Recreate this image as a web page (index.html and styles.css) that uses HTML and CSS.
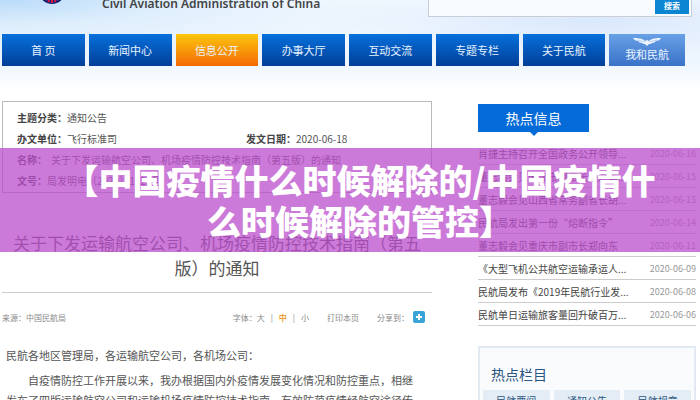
FILE: index.html
```html
<!DOCTYPE html>
<html lang="zh-CN">
<head>
  <meta charset="UTF-8" />
  <meta name="viewport" content="width=device-width, initial-scale=1.0"/>
  <title>中国民用航空局</title>
  <link rel="stylesheet" href="styles.css">
</head>
<body>
  <header class="header">
    <div class="top">
      <svg class="logo" viewBox="0 0 26 26" aria-hidden="true">
        <circle cx="13" cy="13" r="13" fill="#1d2577"/>
        <path d="M5 17l3 5M9 17l1 7M13 17v8M17 17l-1 7M21 17l-3 5" stroke="#d5163c" stroke-width="2"/>
      </svg>
      <p class="site-name">Civil Aviation Administration of China</p>
      <form class="search">
        <input type="text" class="search-input" aria-label="搜索内容">
        <button type="submit" class="search-button">搜索</button>
      </form>
    </div>
    <nav class="nav">
      <a href="#">首 页</a>
      <a href="#">新闻中心</a>
      <a href="#" class="active">信息公开</a>
      <a href="#">办事大厅</a>
      <a href="#">互动交流</a>
      <a href="#">专题专栏</a>
      <a href="#">关于民航</a>
      <a href="#" class="mine">
        <svg class="wings" viewBox="0 0 28 8" aria-hidden="true">
          <path d="M0 0c4 0 9 0 12 3l2-1 2 1c3-3 8-3 12-3-1 2-3 3-5 3-1 1-2 2-4 2-1 1-2 1-3 1l-2 2-2-2c-1 0-2 0-3-1-2 0-3-1-4-2-2 0-4-1-5-3z" fill="#eef5ff"/>
          <path d="M4 2l8 2M24 2l-8 2" stroke="#8fb5ea" stroke-width="0.6"/>
        </svg>
        我和民航
      </a>
    </nav>
  </header>

  <div class="content">
    <main class="article">
      <dl class="info">
        <div class="wide"><dt>主题分类：</dt><dd>通知公告</dd></div>
        <div><dt>办文单位：</dt><dd>飞行标准司</dd></div>
        <div><dt>发文日期：</dt><dd>2020-06-18</dd></div>
        <div class="wide"><dt>名称：</dt><dd class="name">关于下发运输航空公司、机场疫情防控技术指南（第五版）的通知</dd></div>
        <div class="wide"><dt>文号：</dt><dd>局发明电〔2020〕1923号</dd></div>
      </dl>
      <h1 class="title">关于下发运输航空公司、机场疫情防控技术指南（第五版）的通知</h1>
      <div class="meta">
        <span class="source">来源：中国民航局</span>
        <span class="sizes">字体：<a href="#">大</a><i>|</i><a href="#" class="current">中</a><i>|</i><a href="#">小</a></span>
        <a href="#">打印本页</a>
        <span class="share">分享到：
          <button type="button" class="share-button" aria-label="分享">
            <svg viewBox="0 0 12 12"><path d="M6 3v6M3 6h6" stroke="#fff" stroke-width="2"/></svg>
          </button>
        </span>
      </div>
      <div class="text">
        <p class="greeting">民航各地区管理局，各运输航空公司，各机场公司：</p>
        <p>自疫情防控工作开展以来，我办根据国内外疫情发展变化情况和防控重点，相继发布了四版运输航空公司和运输机场疫情防控技术指南，有效防范疫情经航空途径传播。</p>
      </div>
    </main>

    <aside class="sidebar">
      <h2 class="tab">热点信息</h2>
      <ul class="news">
        <li><a href="#">肖捷主持召开全国政务公开领导...</a><time>2020-06-16</time></li>
        <li><a href="#">董志毅会见天津市副市长金湘军...</a><time>2020-06-15</time></li>
        <li><a href="#">董志毅会见山西省常务副省长胡...</a><time>2020-06-15</time></li>
        <li><a href="#">民航局发出第一份“熔断指令”</a><time>2020-06-14</time></li>
        <li><a href="#">董志毅会见重庆市副市长郑向东</a><time>2020-06-11</time></li>
        <li><a href="#">《大型飞机公共航空运输承运人...</a><time>2020-06-09</time></li>
        <li><a href="#">民航局发布《2019年民航行业发...</a><time>2020-06-08</time></li>
        <li><a href="#">民航单日运输旅客量回升破百万...</a><time>2020-06-06</time></li>
      </ul>
      <section class="columns">
        <h2>热点栏目</h2>
        <div class="column-links">
          <a href="#">民航要闻</a>
          <a href="#">通知公告</a>
          <a href="#">民航规章</a>
        </div>
      </section>
    </aside>
  </div>

  <div class="banner">【中国疫情什么时候解除的/中国疫情什么时候解除的管控】</div>
</body>
</html>
```

FILE: styles.css
```css
* {
  box-sizing: border-box;
}
body {
  position: relative;
  height: 100vh;
  margin: 0;
  overflow: hidden;
  font-family: "Noto Sans CJK SC", "Noto Sans", sans-serif;
  font-size: 10px;
  color: #555;
  background: #fff;
}
a {
  color: inherit;
  text-decoration: none;
}
h1, h2, p, ul, dl, dd {
  margin: 0;
  padding: 0;
  font-weight: normal;
}

/* header */
.header {
  height: 101px;
  background:
    radial-gradient(ellipse at 0 0, #b9dbf9 0, rgba(210, 232, 251, 0.6) 18%, rgba(255, 255, 255, 0) 45%),
    radial-gradient(ellipse at 85% 20%, #d9e8fc 0, rgba(255, 255, 255, 0) 35%),
    linear-gradient(#f8fbff, #edf5fe 60%, #fff 90%);
}
.top {
  display: flex;
  align-items: flex-end;
  height: 17px;
  padding: 0 8px 0 39px;
  overflow: hidden;
}
.logo {
  width: 26px;
  height: 26px;
  margin-bottom: 13px;
  flex: none;
}
.site-name {
  margin: 0 auto 5px 37px;
  font-family: "Noto Sans", sans-serif;
  font-size: 12px;
  font-weight: 600;
  line-height: 16px;
  color: #444;
  white-space: nowrap;
}
.search {
  display: flex;
  flex: 0 0 264px;
  height: 40px;
  padding: 2px;
  background: #f8fbff;
  border: 1px solid #c9ced6;
}
.search-input {
  flex: 1;
  min-width: 0;
  border: 0;
  background: transparent;
}
.search-button {
  width: 34px;
  padding: 18px 0 0;
  border: 0;
  background: #0b84d2;
  color: #fff;
  font: bold 8px/16px "Noto Sans CJK SC", sans-serif;
}
.nav {
  display: flex;
  gap: 4px;
  margin-top: 17px;
  padding: 0 15px 0 2px;
}
.nav a {
  flex: 83;
  height: 32px;
  line-height: 33px;
  font-size: 11px;
  text-align: center;
  color: #e8f4ff;
  background: linear-gradient(#0670dc, #023f98);
}
.nav .active {
  background: linear-gradient(#fcc60c, #f46a05);
}
.nav .mine {
  display: flex;
  flex: 76;
  flex-direction: column;
  align-items: center;
  padding-top: 4px;
  line-height: 16px;
  background: linear-gradient(#68a0e6, #3a72c8);
}
.wings {
  width: 28px;
  height: 8px;
  flex: none;
}

/* two columns */
.content {
  display: grid;
  grid-template-columns: 430fr 218fr;
  gap: 46px;
  padding: 0 4px 0 2px;
}
.info {
  display: grid;
  grid-template-columns: 229fr 171fr;
  padding: 5px 14px 1px;
  border: 1px solid #b8b8b8;
  line-height: 21px;
}
.info div {
  display: flex;
}
.info .wide {
  grid-column: 1 / 3;
}
.info dt {
  font-weight: bold;
  color: #444;
}
.info .name {
  margin-left: 4px;
}
.title {
  margin-top: 37px;
  padding: 0 10px 12px;
  border-bottom: 1px solid #ccc;
  font-size: 17px;
  line-height: 25px;
  text-align: center;
  color: #555;
}
.meta {
  display: flex;
  align-items: center;
  gap: 18px;
  height: 20px;
  margin-top: 14px;
  padding-right: 7px;
  font-size: 8px;
  color: #888;
}
.source {
  margin-right: auto;
}
.sizes i {
  margin: 0 6px;
  font-style: normal;
}
.sizes .current {
  font-weight: bold;
  color: #e8a03c;
}
.share {
  display: flex;
  align-items: center;
}
.share-button {
  width: 12px;
  height: 12px;
  margin-left: 4px;
  padding: 0;
  border: 0;
  border-radius: 2px;
  background: #3ba3d8;
}
.share-button svg {
  display: block;
}
.text {
  padding: 0 10px 0 4px;
  margin-top: 18px;
  font-size: 11px;
  line-height: 20px;
}
.text p {
  text-indent: 22px;
}
.text .greeting {
  margin-bottom: 5px;
  text-indent: 0;
}

/* sidebar */
.tab {
  position: relative;
  width: 111px;
  margin-top: 3px;
  font-size: 14px;
  line-height: 28px;
  text-align: center;
  color: #fff;
  background: #046bd8;
}
.tab::after {
  content: "";
  position: absolute;
  top: 100%;
  left: 50%;
  margin-left: -4px;
  border: 4px solid transparent;
  border-top-color: #046bd8;
  border-bottom: 0;
}
.news {
  margin-top: 10px;
  list-style: none;
}
.news li {
  display: flex;
  justify-content: space-between;
  height: 23px;
  line-height: 23px;
  border-bottom: 1px solid #ccc;
  white-space: nowrap;
  color: #444;
}
.news time {
  font-size: 9px;
  color: #999;
}
.columns {
  margin-top: 20px;
  padding: 16px 3px 10px;
  border: 2px solid #e3e9f2;
  background: #fafbfd;
  color: #2b5683;
}
.columns h2 {
  padding-left: 8px;
  font-size: 14px;
  line-height: 20px;
}
.column-links {
  display: grid;
  grid-template-columns: repeat(3, 1fr);
  gap: 4px;
  margin-top: 6px;
}
.column-links a {
  line-height: 22px;
  text-align: center;
  background: #e4ecf5;
}

/* headline over the page */
.banner {
  position: absolute;
  top: 148px;
  left: 0;
  right: 0;
  padding: 11px 40px 11px 60px;
  font-size: 34px;
  font-weight: 900;
  line-height: 41px;
  text-align: center;
  color: #fff;
  background: rgba(187, 78, 204, 0.75);
}
```
